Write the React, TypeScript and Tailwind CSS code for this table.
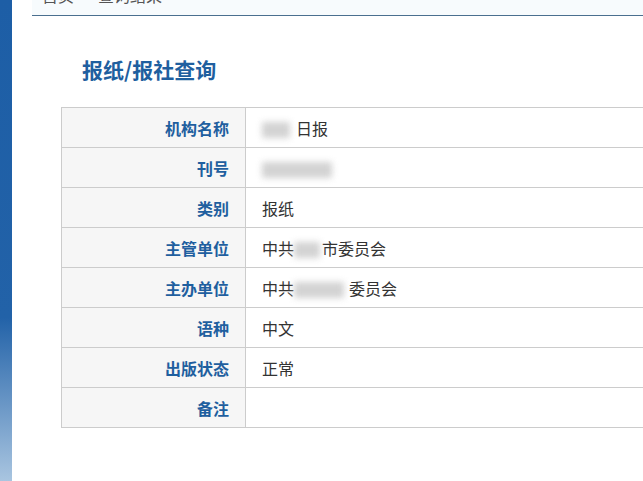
const Blur = ({ w }: { w: number }) => (
  <span
    className="inline-block h-[16px] align-middle bg-[#c8c8c8] blur-[3px] opacity-80"
    style={{ width: w }}
  />
);

const data = [
  {
    label: "机构名称",
    value: (
      <>
        <span className="inline-block w-[34px]">
          <Blur w={28} />
        </span>
        日报
      </>
    ),
  },
  { label: "刊号", value: <Blur w={70} /> },
  { label: "类别", value: "报纸" },
  {
    label: "主管单位",
    value: (
      <>
        中共
        <span className="inline-block w-[28px]">
          <Blur w={26} />
        </span>
        市委员会
      </>
    ),
  },
  {
    label: "主办单位",
    value: (
      <>
        中共
        <span className="inline-block w-[55px]">
          <Blur w={50} />
        </span>
        委员会
      </>
    ),
  },
  { label: "语种", value: "中文" },
  { label: "出版状态", value: "正常" },
  { label: "备注", value: "" },
];

export default function App() {
  return (
    <div className="flex h-[481px] w-[643px] overflow-hidden bg-white font-['Noto_Sans_CJK_SC','Microsoft_YaHei',sans-serif]">
      <div className="w-[12px] shrink-0 bg-[linear-gradient(to_bottom,#1d5ea6_0%,#2262a8_66%,#a9c5e0_100%)]" />
      <div className="flex-1 pl-[20px]">
        <div className="h-[16px] overflow-hidden border-b border-[#4a6f8f] bg-[#f7fbfd]">
          <div className="-mt-[16px] pl-[10px] text-[16px] leading-[22px] text-[#555]">
            首页 <span className="px-[4px]">&gt;</span> 查询结果
          </div>
        </div>
        <div className="pl-[50px] pt-[38px]">
          <h1 className="text-[21px] font-bold leading-[30px] text-[#1f5f9f]">
            报纸/报社查询
          </h1>
        </div>
        <div className="ml-[29px] mt-[23px] w-[680px] border border-[#cccccc]">
          {data.map((r, i) => (
            <div
              key={r.label}
              className={`flex ${i > 0 ? "h-[40px] border-t border-[#cccccc]" : "h-[39px]"}`}
            >
              <div className="flex w-[184px] shrink-0 items-center justify-end border-r border-[#cccccc] bg-[#f6f6f6] pr-[16px] text-[16px] font-bold text-[#1f5f9f]">
                {r.label}
              </div>
              <div className="flex flex-1 items-center pl-[16px] text-[16px] text-[#333]">
                <span className="whitespace-nowrap">{r.value}</span>
              </div>
            </div>
          ))}
        </div>
      </div>
    </div>
  );
}
